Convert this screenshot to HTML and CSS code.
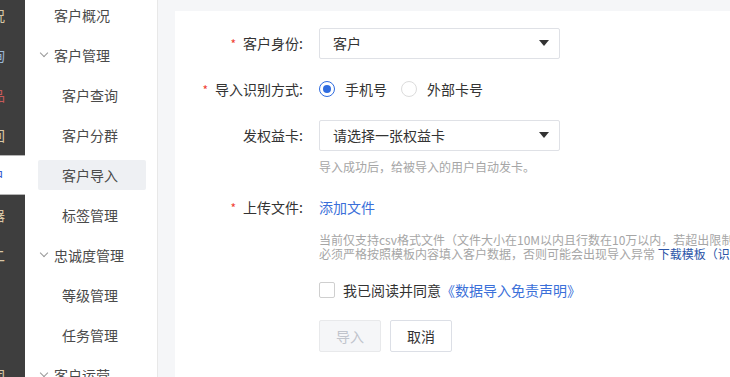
FILE: index.html
```html
<!DOCTYPE html>
<html>

<head>
    <title>客户导入</title>
    <link rel="stylesheet" href="styles.css">
</head>

<body>
    <div class="app">
        <!-- collapsed top level menu, only the edge is visible -->
        <nav class="rail">
            <div class="rail-item tan">况</div>
            <div class="rail-item blue">询</div>
            <div class="rail-item red">品</div>
            <div class="rail-item tan">回</div>
            <div class="rail-item active">户</div>
            <div class="rail-item tan">器</div>
            <div class="rail-item tan">二</div>
            <div class="rail-item"></div>
            <div class="rail-item"></div>
            <div class="rail-item tan">团</div>
        </nav>

        <!-- second level menu -->
        <aside class="menu">
            <div class="menu-item top">客户概况</div>
            <div class="menu-item group"><span class="chev"></span>客户管理</div>
            <div class="menu-item sub">客户查询</div>
            <div class="menu-item sub">客户分群</div>
            <div class="menu-item sub current"><span>客户导入</span></div>
            <div class="menu-item sub">标签管理</div>
            <div class="menu-item group"><span class="chev"></span>忠诚度管理</div>
            <div class="menu-item sub">等级管理</div>
            <div class="menu-item sub">任务管理</div>
            <div class="menu-item group"><span class="chev"></span>客户运营</div>
        </aside>

        <main class="main">
            <div class="card">
                <div class="row">
                    <label class="label"><i>*</i>客户身份:</label>
                    <div class="select">
                        <span>客户</span>
                        <span class="caret"></span>
                    </div>
                </div>

                <div class="row">
                    <label class="label"><i>*</i>导入识别方式:</label>
                    <div class="radios">
                        <span class="radio checked"></span><span class="radio-text">手机号</span>
                        <span class="radio"></span><span class="radio-text">外部卡号</span>
                    </div>
                </div>

                <div class="row">
                    <label class="label">发权益卡:</label>
                    <div class="select">
                        <span>请选择一张权益卡</span>
                        <span class="caret"></span>
                    </div>
                </div>
                <p class="hint">导入成功后，给被导入的用户自动发卡。</p>

                <div class="row upload">
                    <label class="label"><i>*</i>上传文件:</label>
                    <a class="link">添加文件</a>
                </div>
                <p class="hint multi">当前仅支持csv格式文件（文件大小在10M以内且行数在10万以内，若超出限制请分批导入），<br>必须严格按照模板内容填入客户数据，否则可能会出现导入异常 <a class="dark-link">下载模板（识别方式为手机号）</a></p>

                <div class="agree">
                    <span class="checkbox"></span>
                    <span>我已阅读并同意</span><a class="link">《数据导入免责声明》</a>
                </div>

                <div class="actions">
                    <button class="btn disabled">导入</button>
                    <button class="btn">取消</button>
                </div>
            </div>
        </main>
    </div>
</body>
</html>
```

FILE: styles.css
```css
html,
body {
    margin: 0;
    height: 100%;
    overflow: hidden;
}

body {
    font-family: "Noto Sans CJK SC", "Liberation Sans", sans-serif;
    font-size: 14px;
    color: #333;
}

.app {
    display: flex;
    height: 100%;
}

.rail {
    width: 25px;
    flex-shrink: 0;
    background: #3e3e3e;
    overflow: hidden;
    margin-top: -5px;
}

.rail-item {
    height: 40px;
    display: flex;
    align-items: center;
    font-size: 14px;
    box-sizing: border-box;
    text-indent: -9px;
    white-space: nowrap;
}

.rail-item.tan { color: #d9c7a6; }
.rail-item.blue { color: #9cb8d8; }
.rail-item.red { color: #c65a5a; }

.rail-item.active {
    background: #fff;
    color: #3b5fd0;
    border-top: 1px solid #b5b5b5;
    border-bottom: 1px solid #b5b5b5;
    text-indent: -10px;
}

/* second level menu */
.menu {
    width: 132px;
    flex-shrink: 0;
    background: #fff;
    border-right: 1px solid #e8e8e8;
    margin-top: -5px;
}

.menu-item {
    height: 40px;
    display: flex;
    align-items: center;
    color: #4a4a4a;
}

.menu-item.top {
    padding-left: 29px;
}

.menu-item.sub {
    padding-left: 37px;
}

.menu-item.group {
    padding-left: 16px;
}

.menu-item.current span {
    display: block;
    margin-left: -24px;
    padding-left: 24px;
    width: 84px;
    line-height: 30px;
    background: #eef0f3;
    border-radius: 2px;
}

.chev {
    width: 5px;
    height: 5px;
    border-right: 1px solid #999;
    border-bottom: 1px solid #999;
    transform: rotate(45deg);
    margin: -4px 7px 0 0;
}

/* content */
.main {
    flex: 1;
    background: #f5f6f8;
    padding: 11px 0 0 17px;
    min-width: 0;
}

.card {
    background: #fff;
    height: 100%;
    padding-top: 16px;
    width: 700px;
}

.row {
    display: flex;
    align-items: center;
    height: 32px;
    margin-bottom: 14px;
}

.label {
    width: 128px;
    margin-right: 16px;
    text-align: right;
    flex-shrink: 0;
}

.label i {
    font-style: normal;
    color: #f04134;
    font-size: 12px;
    margin-right: 7px;
}

.select {
    width: 241px;
    height: 31px;
    box-sizing: border-box;
    border: 1px solid #dfe1e6;
    border-radius: 2px;
    display: flex;
    align-items: center;
    justify-content: space-between;
    padding: 0 10px 0 13px;
}

.caret {
    width: 0;
    height: 0;
    border-left: 5px solid transparent;
    border-right: 5px solid transparent;
    border-top: 6px solid #333;
}

.radios {
    display: flex;
    align-items: center;
}

.radio {
    width: 16px;
    height: 16px;
    box-sizing: border-box;
    border: 1px solid #dcdcdc;
    border-radius: 50%;
    margin-right: 10px;
    position: relative;
}

.radio.checked {
    border-color: #2f6ce0;
}

.radio.checked::after {
    content: "";
    position: absolute;
    left: 3px;
    top: 3px;
    width: 8px;
    height: 8px;
    border-radius: 50%;
    background: #2f6ce0;
}

.radio-text {
    margin-right: 14px;
}

.hint {
    margin: -6px 0 0 144px;
    font-size: 12px;
    line-height: 16px;
    color: #a6a6a6;
    white-space: nowrap;
}

.hint.multi {
    margin-top: 10px;
    line-height: 14px;
}

.upload {
    margin-top: 16px;
    margin-bottom: 0;
}

.link {
    color: #3a6fd9;
}

.dark-link {
    color: #2c55a8;
}

.agree {
    display: flex;
    align-items: center;
    height: 32px;
    margin: 13px 0 0 144px;
}

.checkbox {
    width: 16px;
    height: 16px;
    box-sizing: border-box;
    border: 1px solid #cfcfcf;
    border-radius: 2px;
    margin-right: 8px;
}

.actions {
    display: flex;
    gap: 9px;
    margin: 14px 0 0 144px;
}

.btn {
    font-family: inherit;
    font-size: 14px;
    width: 62px;
    height: 32px;
    background: #fff;
    border: 1px solid #dcdfe6;
    border-radius: 2px;
    color: #333;
    padding: 0;
}

.btn.disabled {
    background: #f5f6f8;
    border-color: #e8e9eb;
    color: #c0c4cc;
}
```
